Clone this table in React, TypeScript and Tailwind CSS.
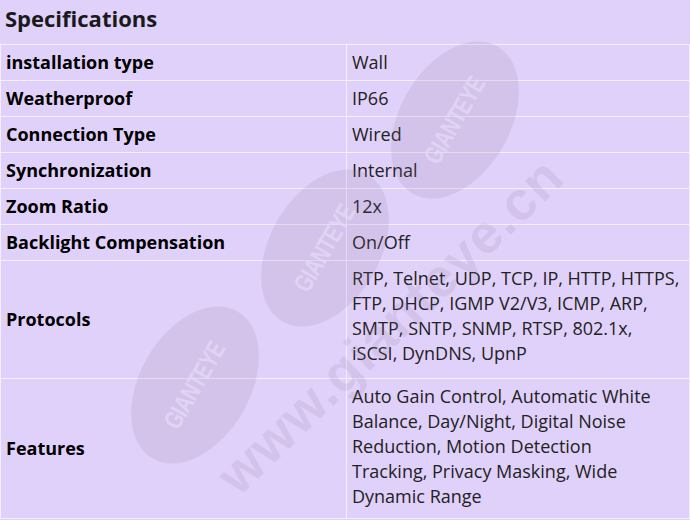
const specs: { k: string; lines: string[]; pad?: string }[] = [
  { k: "installation type", lines: ["Wall"] },
  { k: "Weatherproof", lines: ["IP66"] },
  { k: "Connection Type", lines: ["Wired"] },
  { k: "Synchronization", lines: ["Internal"] },
  { k: "Zoom Ratio", lines: ["12x"] },
  { k: "Backlight Compensation", lines: ["On/Off"] },
  {
    k: "Protocols",
    lines: [
      "RTP, Telnet, UDP, TCP, IP, HTTP, HTTPS,",
      "FTP, DHCP, IGMP V2/V3, ICMP, ARP,",
      "SMTP, SNTP, SNMP, RTSP, 802.1x,",
      "iSCSI, DynDNS, UpnP",
    ],
    pad: "pb-[12px]",
  },
  {
    k: "Features",
    lines: [
      "Auto Gain Control, Automatic White",
      "Balance, Day/Night, Digital Noise",
      "Reduction, Motion Detection",
      "Tracking, Privacy Masking, Wide",
      "Dynamic Range",
    ],
    pad: "pb-[9px]",
  },
]

function Badge({ className }: { className: string }) {
  return (
    <div
      className={`absolute w-[110px] h-[170px] rounded-[50%] bg-[#8a7a9c]/15 flex items-center justify-center rotate-[30deg] ${className}`}
    >
      <span className="-rotate-90 text-[26px] font-bold tracking-tight text-[#e6dbf7]/70 font-['Liberation_Sans_Narrow','Liberation_Sans',sans-serif] scale-x-75">
        GIANTEYE
      </span>
    </div>
  )
}

export default function App() {
  return (
    <div className="relative w-[690px] h-[520px] overflow-hidden bg-[#e0d1fa] font-['Open_Sans',sans-serif] text-[#111]">
      <div className="h-[44px] px-[5px] pt-[2px] text-[22px] font-bold text-[#1a1a1a]">Specifications</div>
      <table className="w-full border-collapse text-[18px] leading-[25px]">
        <tbody>
          {specs.map(({ k, lines, pad }) => (
            <tr key={k}>
              <td className="w-[346px] border border-[#f4eefd] px-[5px] py-[5px] font-bold text-black">{k}</td>
              <td className={`border border-[#f4eefd] px-[5px] pt-[5px] text-[#222] ${pad ?? "pb-[5px]"}`}>
                {lines.map((l) => (
                  <div key={l}>{l}</div>
                ))}
              </td>
            </tr>
          ))}
        </tbody>
      </table>

      {/* watermark */}
      <div className="pointer-events-none absolute inset-0">
        <Badge className="left-[400px] top-[35px]" />
        <Badge className="left-[270px] top-[163px]" />
        <Badge className="left-[140px] top-[300px]" />
        <div className="absolute left-[150px] top-[285px] w-[480px] text-center -rotate-[44deg] text-[54px] font-bold tracking-wide text-[#8a7a9c]/15 font-['Liberation_Sans',sans-serif]">
          www.gianteye.cn
        </div>
      </div>
    </div>
  )
}
